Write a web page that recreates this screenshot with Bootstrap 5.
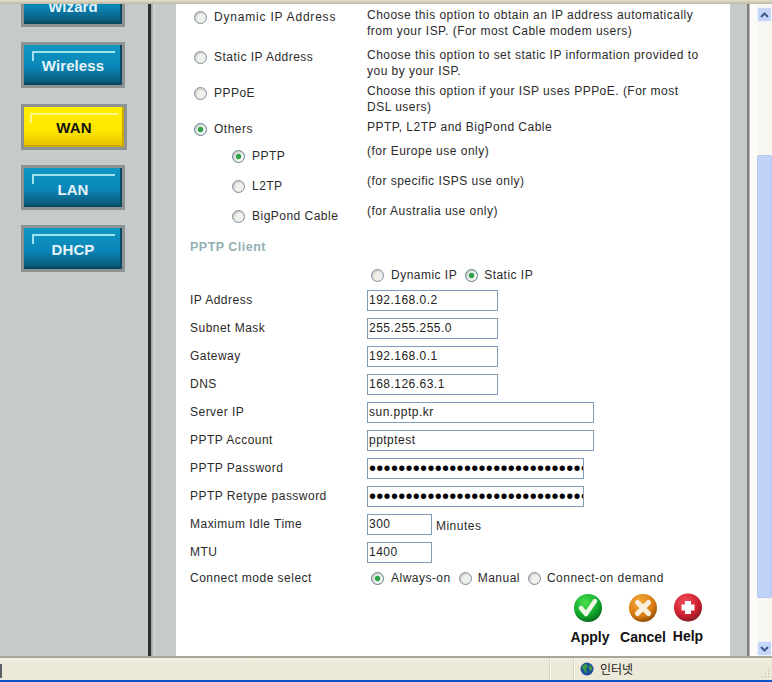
<!DOCTYPE html>
<html lang="en"><head><meta charset="utf-8"><title>WAN</title>
<link href="https://cdn.jsdelivr.net/npm/bootstrap@5.3.0/dist/css/bootstrap.min.css" rel="stylesheet">
<style>
html,body{height:100%;overflow:hidden}
body{background:#ece9d8;font-family:"Liberation Sans",Arial,sans-serif;font-size:12px;line-height:16px;color:#2a2a2a;letter-spacing:.48px}
.shell{height:682px;width:772px}
.topstrip{height:4px;background:linear-gradient(#e6e1cc,#bdb8a2)}
.mainarea{height:652px;overflow:hidden}
.sidenav{width:148px;background:#c5cbcb;padding-left:21px}
.sep{width:3px;background:#2f2f2f}
.sep2{width:4px;background:linear-gradient(90deg,#9a9e9e,#dfe3e3)}
.gutter{width:21px;background:#c5cbcb}
.gutter2{width:17px;background:#c5cbcb}
.sep3{width:3px;background:linear-gradient(90deg,#8a8a8a,#6c6c6c 40%,#d8d8d8)}
.pane{width:554px;background:#fff;padding:3px 0 0 14px}
.track{width:7px;background:#fcfbf7}
.sbar{width:15px;background:#f7f6f0}
.sbtn{height:15px;background:#c6d6f8;border:1px solid #eef2fc;border-radius:2px}
.sup{margin-top:3px}
.strack1{height:133px}.strack2{height:43px}
.thumb{height:443px;background:#c0d2f8;border:1px solid #b2c6f0;border-radius:2px}
.navbtn{display:flex;align-items:center;justify-content:center;width:104px;height:46px;background:#8e9292;padding:3px;flex:none}
.navface{position:relative;width:100%;height:100%;display:flex;align-items:center;justify-content:center;font-weight:700;font-size:15px;letter-spacing:.1px;color:#e6f4f8;background:linear-gradient(#0f97c4,#0a86b8 55%,#0b5e80 90%,#0a4a60);box-shadow:inset -2px -2px 0 #074a62}
.navface::before{content:"";position:absolute;left:8px;top:6px;right:7px;height:10px;border-top:2px solid #9fe3ee;border-left:2px solid #9fe3ee}
.navtxt{position:relative;top:1px}
.nb-wiz{margin-top:-23px}
.nb-wiz .navtxt{top:3px}
.nb-wire{margin-top:15px}
.nb-wan{margin-top:16px;width:106px}
.nb-lan{margin-top:15px;height:45px}
.nb-dhcp{margin-top:15px;height:47px}
.nb-lan .navtxt{top:2px}
.face-wan{color:#111;background:linear-gradient(#ffef00,#ffe600 60%,#e0bd00);box-shadow:inset -2px -2px 0 #c9a800}
.face-wan::before{border-color:#fff78c;left:6px;top:6px;right:6px;height:10px}
.r40{height:40px}.r36{height:36px}.r24{height:24px}.r30{height:30px}.r26{height:26px}.r27{height:27px}.r28{height:28px}
.optcell{width:177px;padding-top:2px}
.optsub{padding-top:5px}
.stretch{letter-spacing:.8px}
.rd.form-check-input{width:13px;height:13px;margin:0 7px 0 4px;flex:none;border:1px solid #7f8f9f;background-color:#f1f1ec;background-image:none;box-shadow:inset 1px 1px 2px #c4c4bc}
.rd.form-check-input:checked{background-color:#f6f6f2;border-color:#5d7f8f;background-image:radial-gradient(circle at center,#2fa34a 0 2.3px,#d8e8d8 3px,transparent 4px)}
.rd.indent{margin-left:42px}
.rd.inl1{margin-left:4px}
.rd.inl2{margin-left:8px;margin-right:6px}
.head{color:#93b0b5;font-weight:700;font-size:12.5px;padding-top:1px}
.iprow{padding-top:5px}
.flabel{width:177px;flex:none}
.fin.form-control{height:21px;padding:0 0 0 1px;border:1px solid #7f9db9;border-radius:0;font-size:12px;line-height:19px;color:#222;letter-spacing:.48px;font-family:"Liberation Sans",Arial,sans-serif;box-shadow:none;min-height:0}
.w131{width:131px}.w227{width:227px}.w217{width:217px}.w65{width:65px}
.pw.form-control{letter-spacing:.3px;font-size:20px;color:#000;padding-left:1px}
.unit{margin-left:4px;padding-top:4px}
.actions{padding-left:378px;margin-top:3px}
.act{font-weight:700;font-size:14px;letter-spacing:0;color:#111;line-height:16px;text-align:center}
.act1{width:44px}.act2{width:46px;margin-left:8px}.act3{width:32px;margin-left:6px}
.act svg{display:block;margin:0 auto 6px}
.act1 svg{margin-left:5px}
.statusbar{height:24px;border-top:2px solid #a9a695;background:linear-gradient(#f2efe2,#ece9d8 30%);padding-right:2px}
.sleft{width:2px;height:14px;margin-top:6px;background:#5a5f66}
.scell{border-left:1px solid #d6d3c2;box-shadow:inset 1px 0 0 #f8f7f0;height:100%}
.c1{margin-left:547px;width:24px}
.c2{padding-left:6px;font-family:"Noto Sans CJK KR","Liberation Sans",sans-serif;letter-spacing:0;color:#222;gap:6px;flex:1}
.grip{margin-left:auto;align-self:flex-end;margin-bottom:1px}
.bluebar{height:2px;background:#0a54d0}
</style></head><body>
<div class="shell d-flex flex-column">
<div class="topstrip"></div>
<div class="mainarea d-flex">
 <nav class="sidenav d-flex flex-column">
  <div class="navbtn nb-wiz"><div class="navface"><span class="navtxt">Wizard</span></div></div>
  <div class="navbtn nb-wire"><div class="navface"><span class="navtxt">Wireless</span></div></div>
  <div class="navbtn nb-wan"><div class="navface face-wan"><span class="navtxt">WAN</span></div></div>
  <div class="navbtn nb-lan"><div class="navface"><span class="navtxt">LAN</span></div></div>
  <div class="navbtn nb-dhcp"><div class="navface"><span class="navtxt">DHCP</span></div></div>
 </nav>
 <div class="sep"></div><div class="sep2"></div><div class="gutter"></div>
 <main class="pane">
  <div class="d-flex r40"><div class="optcell d-flex align-items-center align-self-start"><input class="form-check-input rd" type="radio" name="w"><span class="stretch">Dynamic IP Address</span></div><div>Choose this option to obtain an IP address automatically<br>from your ISP. (For most Cable modem users)</div></div>
  <div class="d-flex r36"><div class="optcell d-flex align-items-center align-self-start"><input class="form-check-input rd" type="radio" name="w"><span>Static IP Address</span></div><div>Choose this option to set static IP information provided to<br>you by your ISP.</div></div>
  <div class="d-flex r36"><div class="optcell d-flex align-items-center align-self-start"><input class="form-check-input rd" type="radio" name="w"><span>PPPoE</span></div><div>Choose this option if your ISP uses PPPoE. (For most<br>DSL users)</div></div>
  <div class="d-flex r24"><div class="optcell d-flex align-items-center align-self-start"><input class="form-check-input rd" type="radio" name="w" checked><span>Others</span></div><div>PPTP, L2TP and BigPond Cable</div></div>
  <div class="d-flex r30"><div class="optcell optsub d-flex align-items-center align-self-start"><input class="form-check-input rd indent" type="radio" name="o" checked><span>PPTP</span></div><div>(for Europe use only)</div></div>
  <div class="d-flex r30"><div class="optcell optsub d-flex align-items-center align-self-start"><input class="form-check-input rd indent" type="radio" name="o"><span>L2TP</span></div><div>(for specific ISPS use only)</div></div>
  <div class="d-flex r30"><div class="optcell optsub d-flex align-items-center align-self-start"><input class="form-check-input rd indent" type="radio" name="o"><span>BigPond Cable</span></div><div>(for Australia use only)</div></div>
  <div class="d-flex align-items-center r26 head">PPTP Client</div>
  <div class="d-flex align-items-center r27 iprow"><div class="flabel"></div><input class="form-check-input rd inl1" type="radio" name="m"><span>Dynamic IP</span><input class="form-check-input rd inl2" type="radio" name="m" checked><span>Static IP</span></div>
  <div class="d-flex align-items-center r28"><div class="flabel">IP Address</div><input class="form-control fin w131" value="192.168.0.2"></div>
  <div class="d-flex align-items-center r28"><div class="flabel">Subnet Mask</div><input class="form-control fin w131" value="255.255.255.0"></div>
  <div class="d-flex align-items-center r28"><div class="flabel">Gateway</div><input class="form-control fin w131" value="192.168.0.1"></div>
  <div class="d-flex align-items-center r28"><div class="flabel">DNS</div><input class="form-control fin w131" value="168.126.63.1"></div>
  <div class="d-flex align-items-center r28"><div class="flabel">Server IP</div><input class="form-control fin w227" value="sun.pptp.kr"></div>
  <div class="d-flex align-items-center r28"><div class="flabel">PPTP Account</div><input class="form-control fin w227" value="pptptest"></div>
  <div class="d-flex align-items-center r28"><div class="flabel">PPTP Password</div><input class="form-control fin pw w217" type="password" value="passwordpasswordpasswordpasswordpasswordpassword"></div>
  <div class="d-flex align-items-center r28"><div class="flabel">PPTP Retype password</div><input class="form-control fin pw w217" type="password" value="passwordpasswordpasswordpasswordpasswordpassword"></div>
  <div class="d-flex align-items-center r28"><div class="flabel">Maximum Idle Time</div><input class="form-control fin w65" value="300"><span class="unit">Minutes</span></div>
  <div class="d-flex align-items-center r28"><div class="flabel">MTU</div><input class="form-control fin w65" value="1400"></div>
  <div class="d-flex align-items-center r24"><div class="flabel">Connect mode select</div><input class="form-check-input rd inl1" type="radio" name="c" checked><span>Always-on</span><input class="form-check-input rd inl2" type="radio" name="c"><span>Manual</span><input class="form-check-input rd inl2" type="radio" name="c"><span>Connect-on demand</span></div>
  <div class="d-flex actions">
   <div class="act act1"><svg width="30" height="30" viewBox="0 0 30 30"><defs><radialGradient id="g" cx=".4" cy=".3" r=".8"><stop offset="0" stop-color="#4be04b"/><stop offset=".6" stop-color="#0fa82b"/><stop offset="1" stop-color="#06561a"/></radialGradient></defs><circle cx="15" cy="15" r="14" fill="url(#g)"/><path d="M8 15l5 6 9-13" fill="none" stroke="#eef8e6" stroke-width="4.5" stroke-linecap="round" stroke-linejoin="round"/></svg>Apply</div>
   <div class="act act2"><svg width="30" height="30" viewBox="0 0 30 30"><defs><radialGradient id="o" cx=".4" cy=".3" r=".8"><stop offset="0" stop-color="#f6ab3c"/><stop offset=".6" stop-color="#d97c14"/><stop offset="1" stop-color="#7a3e08"/></radialGradient></defs><circle cx="15" cy="15" r="14" fill="url(#o)"/><path d="M9.500 9.500l11 11M20.500 9.500l-11 11" stroke="#fbf0e0" stroke-width="5" stroke-linecap="round"/></svg>Cancel</div>
   <div class="act act3"><svg width="30" height="29" viewBox="0 0 30 29"><defs><radialGradient id="r" cx=".4" cy=".3" r=".8"><stop offset="0" stop-color="#f0505a"/><stop offset=".6" stop-color="#d0202f"/><stop offset="1" stop-color="#6a1a22"/></radialGradient></defs><circle cx="15" cy="14.500" r="14" fill="url(#r)"/><path d="M15 8v13M8.500 14.500h13" stroke="#fff" stroke-width="6"/></svg>Help</div>
  </div>
 </main>
 <div class="gutter2"></div><div class="sep3"></div><div class="track"></div>
 <div class="sbar d-flex flex-column">
  <div class="sbtn sup d-flex align-items-center justify-content-center"><svg width="9" height="6" viewBox="0 0 9 6"><path d="M1 5l3.500-3.500L8 5" fill="none" stroke="#3f5a8a" stroke-width="2"/></svg></div>
  <div class="strack1"></div><div class="thumb"></div><div class="strack2"></div>
  <div class="sbtn d-flex align-items-center justify-content-center"><svg width="9" height="6" viewBox="0 0 9 6"><path d="M1 1l3.500 3.500L8 1" fill="none" stroke="#3f5a8a" stroke-width="2"/></svg></div>
 </div>
</div>
<footer class="statusbar d-flex">
 <div class="sleft"></div>
 <div class="scell c1"></div>
 <div class="scell c2 d-flex align-items-center"><svg width="14" height="14" viewBox="0 0 14 14"><circle cx="7" cy="7" r="6.500" fill="#1d4f9c"/><path d="M3 3l3-1 2 2-2 3 1 3-2 1-1-3-2-2zM9 3l3 2 0 3-2 1-1-3z" fill="#3f9c45"/></svg><span>인터넷</span>
  <svg class="grip" width="10" height="10" viewBox="0 0 10 10"><path d="M8 1h1v1H8zM5 4h1v1H5zM8 4h1v1H8zM2 7h1v1H2zM5 7h1v1H5zM8 7h1v1H8z" fill="#b5b29f"/></svg></div>
</footer>
<div class="bluebar"></div>
</div>
</body></html>
